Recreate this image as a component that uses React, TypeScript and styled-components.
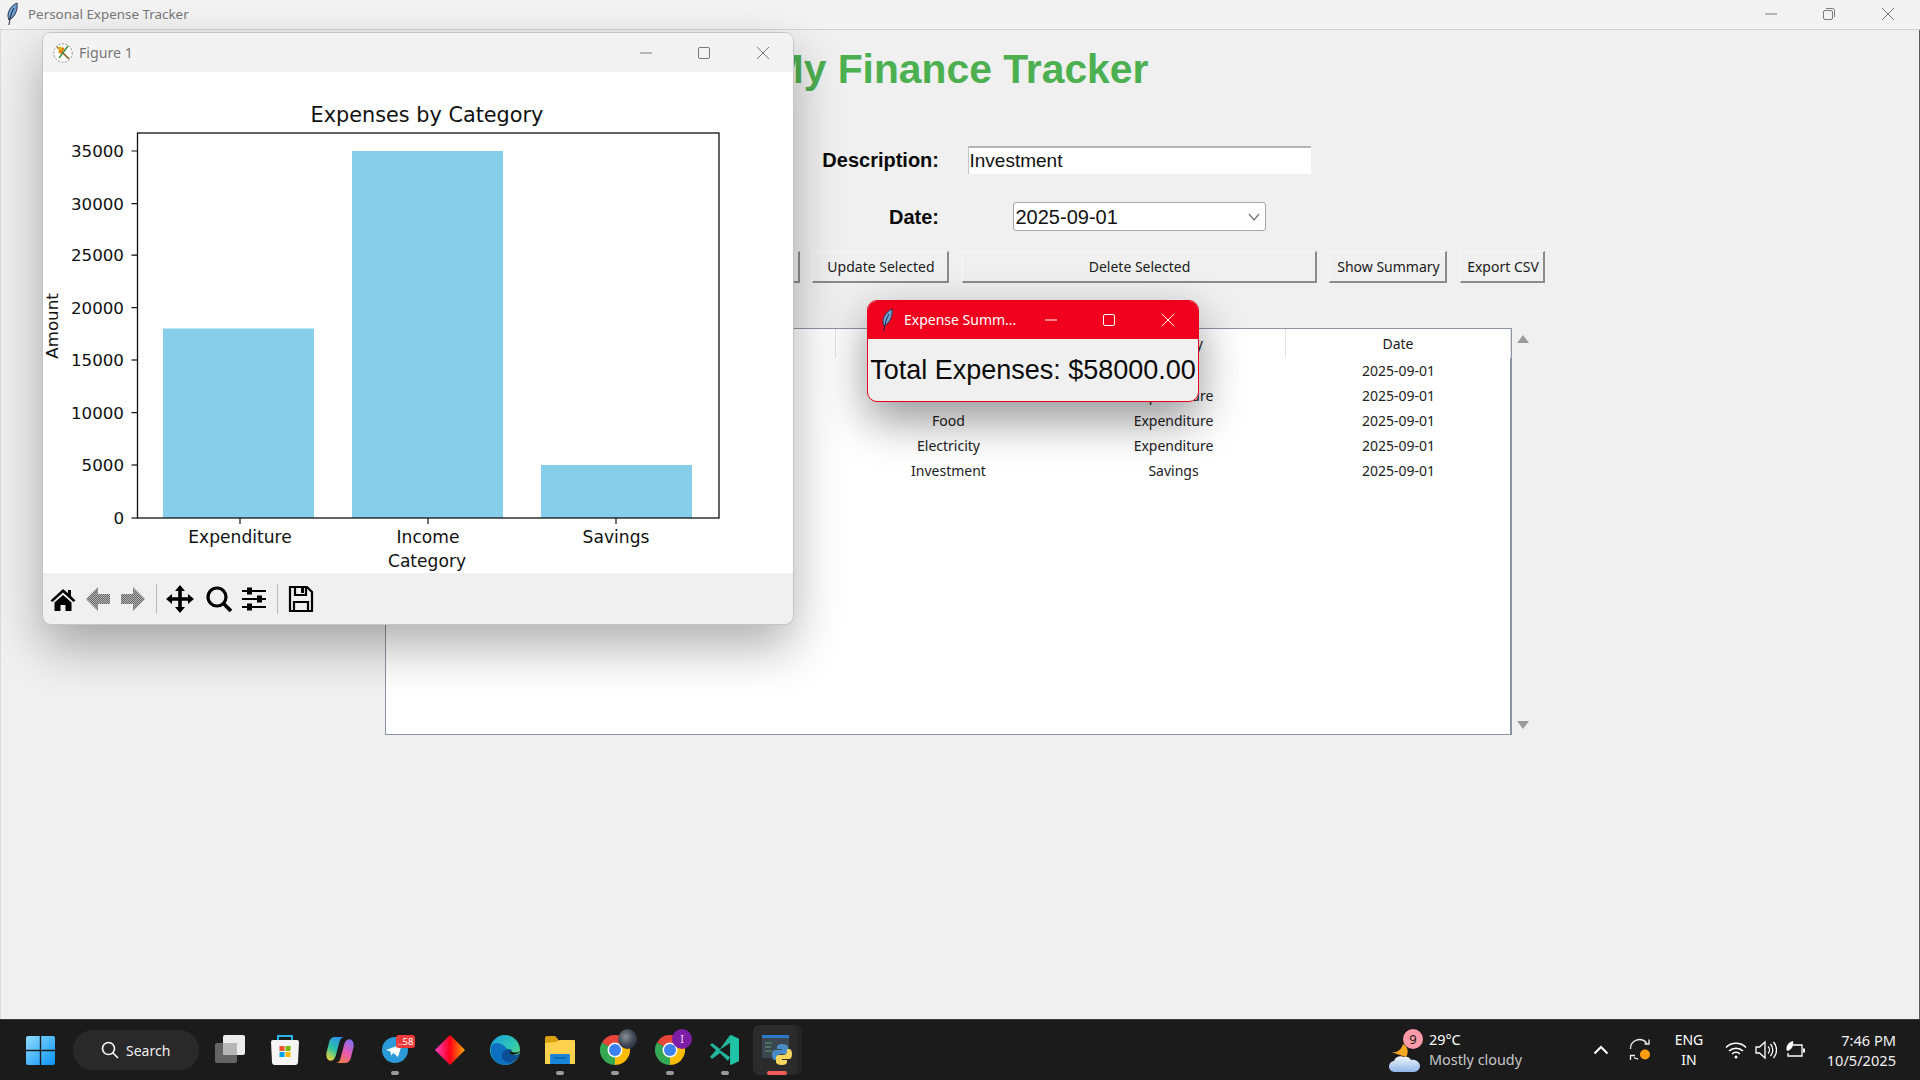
import React from 'react';
import styled, { createGlobalStyle } from 'styled-components';

const ui = '"Noto Sans", "Open Sans", sans-serif';
const arial = '"Liberation Sans", Arial, sans-serif';
const gridCols = '805px 149px 368px 130px 99px';

const Global = createGlobalStyle`
  html, body { margin: 0; padding: 0; width: 1920px; height: 1080px; overflow: hidden; }
  * { box-sizing: border-box; }
`;

const Screen = styled.div`
  position: relative;
  width: 1920px;
  height: 1080px;
  display: flex;
  flex-direction: column;
  background: #f0f0f0;
  overflow: hidden;
  font-family: ${ui};
`;

const TitleBar = styled.header`
  height: 30px;
  flex: none;
  display: flex;
  align-items: center;
  background: #f3f3f3;
  border-bottom: 1px solid #d2d2d2;
  padding: 0 3px 2px 5px;
`;
const AppTitle = styled.span`
  font-size: 13.4px;
  color: #777;
  margin-left: 9px;
  white-space: nowrap;
  flex: 1;
`;

const Controls = styled.div`
  display: flex;
  flex: none;
  color: ${(p: { $color: string }) => p.$color};
`;
const ControlSlot = styled.span`
  width: 58.6px;
  display: flex;
  justify-content: center;
  align-items: center;
`;

const Main = styled.main`
  flex: 1;
  display: flex;
  flex-direction: column;
  border-left: 1px solid #dcdcdc;
  border-right: 1px solid #5c5c5c;
`;
const Heading = styled.h1`
  margin: 15px 0 0;
  height: 48px;
  text-align: center;
  font: bold 40.8px/48px ${arial};
  color: #4caf50;
  padding-right: 2px;
`;
const FormGrid = styled.section`
  margin-top: 53px;
  display: grid;
  grid-template-columns: ${gridCols};
  grid-template-rows: 28px 29px;
  row-gap: 28px;
  align-items: center;
`;
const FieldLabel = styled.label`
  grid-column: 2;
  justify-self: end;
  padding: 1px 16px 0 0;
  font: bold 20px ${arial};
  color: #0a0a0a;
`;
const Entry = styled.input`
  grid-column: 3;
  justify-self: center;
  width: 343px;
  height: 28px;
  border: none;
  border-top: 2px solid #b4b4b4;
  border-left: 1px solid #c4c4c4;
  background: #fff;
  padding: 0 1px;
  font: 19px ${arial};
  color: #111;
  outline: none;
`;
const Combo = styled.div`
  grid-column: 3;
  justify-self: center;
  width: 253px;
  height: 29px;
  display: flex;
  align-items: center;
  justify-content: space-between;
  background: #fff;
  border: 1.5px solid #a6a6a6;
  border-radius: 3px;
  padding: 1px 5px 0 2px;
  font: 20px ${arial};
  color: #111;
`;
const ButtonRow = styled.div`
  margin-top: 20px;
  display: grid;
  grid-template-columns: ${gridCols};
  align-items: center;
`;
const TkButton = styled.button`
  justify-self: center;
  height: 32px;
  padding: 0 0 0 2px;
  width: ${(p: { $w: number }) => p.$w}px;
  background: #f0f0f0;
  border: 1px solid #d8d8d8;
  border-top-color: #f8f8f8;
  border-left-color: #f8f8f8;
  border-right: 2px solid #8c8c8c;
  border-bottom: 2px solid #8c8c8c;
  font: 14px ${ui};
  color: #1a1a1a;
  white-space: nowrap;
`;
const AddButton = styled(TkButton)`
  justify-self: end;
  margin-right: 6px;
`;

const TableArea = styled.section`
  margin: 45px 0 0 384px;
  display: flex;
  height: 407px;
`;
const TableBox = styled.div`
  width: 1127px;
  border: 1px solid #8a94a2;
  border-right-width: 2px;
  background: #fff;
`;
const RowGrid = styled.div`
  display: grid;
  grid-template-columns: repeat(5, 225px);
`;
const HeaderRow = styled(RowGrid)`
  height: 29px;
`;
const HeadCell = styled.div`
  display: flex;
  align-items: center;
  justify-content: center;
  font-size: 14px;
  color: #1a1a1a;
  border-right: 1px solid #e4e4e4;
`;
const BodyRow = styled(RowGrid)`
  height: 25px;
`;
const Cell = styled.div`
  display: flex;
  align-items: center;
  justify-content: center;
  font-size: 14px;
  color: #222;
`;
const ScrollColumn = styled.div`
  width: 22px;
  display: flex;
  flex-direction: column;
  justify-content: space-between;
  align-items: center;
  padding: 7px 0 6px;
  color: #9c9c9c;
`;

const FigureWindow = styled.section`
  position: absolute;
  left: 43px;
  top: 33px;
  width: 750px;
  height: 591px;
  display: flex;
  flex-direction: column;
  border-radius: 8px;
  overflow: hidden;
  background: #f0f0f0;
  box-shadow: 0 0 0 1px #c4c4c4, 0 22px 50px rgba(0, 0, 0, 0.32);
  z-index: 2;
`;
const FigureBar = styled.div`
  flex: none;
  height: 39px;
  display: flex;
  align-items: center;
  background: #f3f3f3;
  padding: 0 1px 0 10px;
`;
const FigureTitle = styled.span`
  flex: 1;
  margin-left: 6px;
  font-size: 14.2px;
  color: #777;
`;
const Canvas = styled.svg`
  display: block;
  flex: none;
  background: #fff;
`;
const ToolRow = styled.div`
  flex: 1;
  display: flex;
  align-items: center;
  gap: 7px;
  padding-left: 6px;
`;
const ToolDivider = styled.span`
  width: 1px;
  height: 30px;
  background: #b8b8b8;
  margin: 0 2px;
`;
const ToolGapAfter = styled.span`
  display: flex;
  margin-right: 4px;
`;

const SummaryWindow = styled.section`
  position: absolute;
  left: 867px;
  top: 300px;
  width: 332px;
  height: 102px;
  display: flex;
  flex-direction: column;
  border-radius: 10px;
  overflow: hidden;
  border: 1px solid #e8001c;
  background: #f0f0f0;
  box-shadow: 0 18px 46px rgba(0, 0, 0, 0.42);
  z-index: 3;
`;
const SummaryBar = styled.div`
  flex: none;
  height: 38px;
  display: flex;
  align-items: center;
  background: #f0001c;
  padding: 0 1px 1px 12px;
`;
const SummaryTitle = styled.span`
  flex: 1;
  margin-left: 10px;
  font-size: 14px;
  color: #fff;
  white-space: nowrap;
`;
const SummaryText = styled.p`
  flex: 1;
  margin: 0;
  display: flex;
  align-items: center;
  justify-content: center;
  font: 27px ${arial};
  color: #0a0a0a;
  white-space: nowrap;
`;

const Taskbar = styled.footer`
  height: 61px;
  flex: none;
  display: flex;
  align-items: center;
  background: #1b1b1b;
  border-top: 1px solid #3c3c3c;
  color: #fff;
  padding-left: 26px;
`;
const SearchPill = styled.div`
  margin-left: 18px;
  margin-right: 3px;
  width: 126px;
  height: 40px;
  border-radius: 20px;
  background: #292929;
  display: flex;
  align-items: center;
  padding-left: 28px;
  gap: 7px;
  font-size: 14px;
  color: #f0f0f0;
`;
const Slot = styled.div<{ $dot?: boolean; $active?: boolean }>`
  position: relative;
  width: 55px;
  height: 60px;
  display: flex;
  align-items: center;
  justify-content: center;
  padding: 0 ${(p) => (p.$active ? 5 : 0)}px 1px 0;
  &::before {
    content: ${(p) => (p.$active ? '""' : 'none')};
    position: absolute;
    left: 1px;
    right: 10px;
    top: 5px;
    bottom: 5px;
    border-radius: 6px;
    background: #2b2b2b;
    box-shadow: 5px 0 0 #242424;
  }
  &::after {
    content: ${(p) => (p.$dot || p.$active ? '""' : 'none')};
    position: absolute;
    left: ${(p) => (p.$active ? '46%' : '50%')};
    bottom: 5px;
    transform: translateX(-50%);
    width: ${(p) => (p.$active ? 20 : 8)}px;
    height: 4px;
    border-radius: 2px;
    background: ${(p) => (p.$active ? '#f25c5c' : '#9a9a9a')};
  }
  & > svg { position: relative; z-index: 1; }
`;
const CountBadge = styled.span`
  position: absolute;
  left: 29px;
  top: 15px;
  width: 19px;
  height: 13px;
  border-radius: 3px;
  background: #ee3a3a;
  color: #fff;
  font-size: 9.5px;
  line-height: 13px;
  text-align: center;
  z-index: 2;
`;
const LetterBadge = styled.span`
  position: absolute;
  left: 30px;
  top: 9px;
  width: 20px;
  height: 20px;
  border-radius: 50%;
  background: #7d1fa6;
  color: #e8d4f2;
  font-size: 11px;
  line-height: 20px;
  text-align: center;
  z-index: 2;
`;
const PhotoBadge = styled.span`
  position: absolute;
  left: 31px;
  top: 9px;
  width: 19px;
  height: 20px;
  border-radius: 50%;
  background: radial-gradient(circle at 40% 40%, #8a8f92, #3a4150 55%, #1d2438);
  z-index: 2;
`;
const Tray = styled.div`
  margin-left: auto;
  margin-right: 24px;
  display: flex;
  align-items: center;
  height: 60px;
`;
const WeatherIcon = styled.div`
  position: relative;
  width: 42px;
  height: 44px;
  display: flex;
  align-items: flex-end;
  padding-left: 2px;
`;
const WeatherBadge = styled.span`
  position: absolute;
  left: 16px;
  top: 1px;
  width: 20px;
  height: 20px;
  border-radius: 50%;
  background: #ff9aa8;
  color: #1b1b1b;
  font-size: 13px;
  line-height: 20px;
  text-align: center;
`;
const WeatherText = styled.div`
  width: 94px;
  display: flex;
  flex-direction: column;
  font-size: 14.4px;
  line-height: 20px;
  white-space: nowrap;
`;
const WeatherSub = styled.span`
  color: #c8c8c8;
`;
const TrayIcon = styled.span`
  display: flex;
  align-items: center;
  justify-content: center;
  width: ${(p: { $w: number; $ml: number }) => p.$w}px;
  margin-left: ${(p: { $w: number; $ml: number }) => p.$ml}px;
`;
const LangBlock = styled.div`
  width: 36px;
  margin-left: 18px;
  text-align: center;
  font-size: 14px;
  line-height: 20px;
`;
const Clock = styled.div`
  width: 89px;
  text-align: right;
  font-size: 14.6px;
  line-height: 20px;
  color: #f2f2f2;
`;

const Feather = () => (
  <svg width="14" height="24" viewBox="0 0 14 24">
    <path d="M4 18C1 12 5 4 12 1c1 7-2 14-8 17z" fill="#6f9fd0" stroke="#2a3450" strokeWidth="1" />
    <path d="M9 6C7 10 5 14 4 23" fill="none" stroke="#1c2440" strokeWidth="1" />
  </svg>
);

const MplIcon = () => (
  <svg width="20" height="20" viewBox="0 0 20 20">
    <circle cx="10" cy="10" r="9.2" fill="#fff" stroke="#777" strokeWidth="0.8" strokeDasharray="2 1.5" />
    <path d="M4 4l12 12" stroke="#8a5a1c" strokeWidth="1.6" />
    <path d="M15 3L6 15" stroke="#2f8f3a" strokeWidth="1.4" />
    <path d="M5 9l5-5 1.5 2-4 5z" fill="#f07a12" />
    <circle cx="7" cy="5.5" r="2" fill="#e2b11f" />
  </svg>
);

const WinControls = ({ color, restore }: { color: string; restore?: boolean }) => (
  <Controls $color={color}>
    <ControlSlot>
      <svg width="14" height="14" viewBox="0 0 14 14"><path d="M1 7h12" stroke="currentColor" strokeWidth="1" /></svg>
    </ControlSlot>
    <ControlSlot>
      {restore ? (
        <svg width="14" height="14" viewBox="0 0 14 14" fill="none" stroke="currentColor" strokeWidth="1">
          <rect x="1.5" y="3.5" width="9" height="9" rx="1.5" />
          <path d="M4 1.5h6.5a2 2 0 0 1 2 2V10" />
        </svg>
      ) : (
        <svg width="14" height="14" viewBox="0 0 14 14" fill="none" stroke="currentColor" strokeWidth="1">
          <rect x="1.5" y="1.5" width="11" height="11" rx="1.5" />
        </svg>
      )}
    </ControlSlot>
    <ControlSlot>
      <svg width="14" height="14" viewBox="0 0 14 14"><path d="M1 1l12 12M13 1L1 13" stroke="currentColor" strokeWidth="1" /></svg>
    </ControlSlot>
  </Controls>
);

const AX = { l: 94.5, r: 676, t: 61, b: 446 };
const yTicks = [
  { v: '35000', y: 79 }, { v: '30000', y: 131.6 }, { v: '25000', y: 183.2 }, { v: '20000', y: 235.6 },
  { v: '15000', y: 288 }, { v: '10000', y: 340.6 }, { v: '5000', y: 393 }, { v: '0', y: 446 },
];
const bars = [
  { label: 'Expenditure', x: 120, w: 151, y: 256.5, tick: 197 },
  { label: 'Income', x: 309, w: 151, y: 79, tick: 385 },
  { label: 'Savings', x: 498, w: 151, y: 393, tick: 573 },
];

const Chart = () => (
  <Canvas width="750" height="501" viewBox="0 0 750 501" fontFamily='"DejaVu Sans", sans-serif'>
    <text x="384" y="49.5" fontSize="20.8" textAnchor="middle" fill="#111">Expenses by Category</text>
    {bars.map((b) => (
      <g key={b.label}>
        <rect x={b.x} y={b.y} width={b.w} height={AX.b - b.y} fill="#87ceeb" />
        <path d={`M${b.tick} ${AX.b}v6`} stroke="#111" strokeWidth="1.2" />
        <text x={b.tick} y="471" fontSize="17.1" textAnchor="middle" fill="#111">{b.label}</text>
      </g>
    ))}
    <rect x={AX.l} y={AX.t} width={AX.r - AX.l} height={AX.b - AX.t} fill="none" stroke="#111" strokeWidth="1.3" />
    {yTicks.map((t) => (
      <g key={t.v}>
        <path d={`M${AX.l - 6} ${t.y}h6`} stroke="#111" strokeWidth="1.2" />
        <text x="81" y={t.y + 6} fontSize="16.7" textAnchor="end" fill="#111">{t.v}</text>
      </g>
    ))}
    <text x="384" y="495" fontSize="17.1" textAnchor="middle" fill="#111">Category</text>
    <text transform="translate(15 254) rotate(-90)" fontSize="16.7" textAnchor="middle" fill="#111">Amount</text>
  </Canvas>
);

const Dither = ({ id }: { id: string }) => (
  <defs>
    <pattern id={id} width="2" height="2" patternUnits="userSpaceOnUse">
      <rect width="2" height="2" fill="#b4b4b4" />
      <rect width="1" height="1" fill="#666" />
      <rect x="1" y="1" width="1" height="1" fill="#666" />
    </pattern>
  </defs>
);

const HomeIcon = () => (
  <svg width="28" height="28" viewBox="0 0 28 28">
    <path d="M14 4L1.5 15.5 3.5 17 14 7.5 24.5 17l2-1.5L22 11V5h-3v3.2z" fill="#000" />
    <path d="M5.5 17.5L14 10l8.5 7.5V26h-6v-6h-5v6h-6z" fill="#000" />
  </svg>
);
const BackIcon = () => (
  <svg width="28" height="28" viewBox="0 0 28 28">
    <Dither id="dl" />
    <path d="M14 2L2 14l12 12v-7h12v-10H14z" fill="url(#dl)" />
  </svg>
);
const ForwardIcon = () => (
  <svg width="28" height="28" viewBox="0 0 28 28">
    <Dither id="dr" />
    <path d="M14 2l12 12-12 12v-7H2v-10h12z" fill="url(#dr)" />
  </svg>
);
const MoveIcon = () => (
  <svg width="28" height="28" viewBox="0 0 28 28">
    <path d="M14 0l5 6h-3.2v6.2H22V9l6 5-6 5v-3.2h-6.2V22H19l-5 6-5-6h3.2v-6.2H6V19l-6-5 6-5v3.2h6.2V6H9z" fill="#000" />
  </svg>
);
const ZoomIcon = () => (
  <svg width="28" height="28" viewBox="0 0 28 28" fill="none" stroke="#000">
    <circle cx="12" cy="12" r="9" strokeWidth="3.2" />
    <path d="M18.5 18.5L26 26" strokeWidth="3.8" />
  </svg>
);
const SlidersIcon = () => (
  <svg width="28" height="28" viewBox="0 0 28 28">
    <path d="M2 6h24M2 14h24M2 22h24" stroke="#000" strokeWidth="2" />
    <rect x="7" y="2.5" width="5" height="7" fill="#000" />
    <rect x="17" y="10.5" width="5" height="7" fill="#000" />
    <rect x="7" y="18.5" width="5" height="7" fill="#000" />
  </svg>
);
const SaveIcon = () => (
  <svg width="28" height="28" viewBox="0 0 28 28" fill="none" stroke="#000" strokeWidth="2.2">
    <path d="M3 2h17l5 5v19H3z" />
    <path d="M8 2v8h11V2" />
    <path d="M7 26v-9h14v9" />
    <rect x="14" y="3" width="3" height="5" fill="#000" stroke="none" />
  </svg>
);

const WindowsLogo = () => (
  <svg width="29" height="29" viewBox="0 0 29 29">
    <defs>
      <linearGradient id="win" x1="0" y1="0" x2="1" y2="1">
        <stop offset="0" stopColor="#8fdcff" />
        <stop offset="1" stopColor="#0a93f5" />
      </linearGradient>
    </defs>
    <path d="M2 0h11.8v13.8H0V2a2 2 0 0 1 2-2zM15.2 0H27a2 2 0 0 1 2 2v11.8H15.2zM0 15.2h13.8V29H2a2 2 0 0 1-2-2zM15.2 15.2H29V27a2 2 0 0 1-2 2H15.2z" fill="url(#win)" />
  </svg>
);
const SearchGlass = () => (
  <svg width="18" height="18" viewBox="0 0 18 18" fill="none" stroke="#f4f4f4" strokeWidth="1.7">
    <circle cx="7.5" cy="7.5" r="6" />
    <path d="M12 12l5 5" />
  </svg>
);
const TaskView = () => (
  <svg width="32" height="30" viewBox="0 0 32 30">
    <rect x="9" y="0" width="22" height="20" rx="2" fill="#ececec" />
    <rect x="1" y="8" width="22" height="20" rx="2" fill="#6a6a6a" fillOpacity="0.92" />
    <rect x="9" y="8" width="14" height="12" fill="#b6b6b6" />
  </svg>
);
const StoreIcon = () => (
  <svg width="30" height="32" viewBox="0 0 30 32">
    <path d="M8 7V2h14v5" fill="none" stroke="#28b4e8" strokeWidth="2" />
    <path d="M3 6h24a2 2 0 0 1 2 2l-1 20a3 3 0 0 1-3 3H5a3 3 0 0 1-3-3L1 8a2 2 0 0 1 2-2z" fill="#f5f5f5" />
    <rect x="9.5" y="12" width="5" height="5" fill="#f0522a" />
    <rect x="15.5" y="12" width="5" height="5" fill="#7ab800" />
    <rect x="9.5" y="18" width="5" height="5" fill="#00a4ef" />
    <rect x="15.5" y="18" width="5" height="5" fill="#ffb900" />
  </svg>
);
const CopilotIcon = () => (
  <svg width="28" height="28" viewBox="0 0 30 30">
    <defs>
      <linearGradient id="copA" x1="0.7" y1="0" x2="0.2" y2="1">
        <stop offset="0" stopColor="#2d8ff0" />
        <stop offset="0.55" stopColor="#2ec4a0" />
        <stop offset="1" stopColor="#f2d43a" />
      </linearGradient>
      <linearGradient id="copB" x1="0.7" y1="0" x2="0.2" y2="1">
        <stop offset="0" stopColor="#8a6cf0" />
        <stop offset="0.5" stopColor="#e85ab0" />
        <stop offset="1" stopColor="#f2803a" />
      </linearGradient>
    </defs>
    <path d="M10 1h10c-3 0-4.500 2-5.500 5L10.500 21c-1 3.500-3 6-6 5.500C1 26 0 22 .5 18L3 8C4 3 6 1 10 1z" fill="url(#copA)" />
    <path d="M20 29H10c3 0 4.500-2 5.500-5l4-15c1-3.500 3-6 6-5.500 3.500.5 4.500 4.500 4 8.500L27 22c-1 5-3 7-7 7z" fill="url(#copB)" />
  </svg>
);
const TelegramIcon = () => (
  <svg width="28" height="28" viewBox="0 0 28 28">
    <circle cx="14" cy="14" r="13" fill="#2a9ad8" />
    <path d="M5 14l16-6-4 13-4.500-4-2.500 2.500-.5-4z" fill="#fff" />
  </svg>
);
const DiamondIcon = () => (
  <svg width="30" height="30" viewBox="0 0 30 30">
    <defs>
      <linearGradient id="dia" x1="0" y1="0" x2="1" y2="0">
        <stop offset="0" stopColor="#ff40c8" />
        <stop offset="0.5" stopColor="#ff0018" />
        <stop offset="1" stopColor="#ffa800" />
      </linearGradient>
    </defs>
    <path d="M15 0l15 15-15 15L0 15z" fill="url(#dia)" />
  </svg>
);
const EdgeIcon = () => (
  <svg width="30" height="30" viewBox="0 0 30 30">
    <defs>
      <linearGradient id="edgeA" x1="0" y1="0" x2="1" y2="1">
        <stop offset="0" stopColor="#1a9ee0" />
        <stop offset="0.55" stopColor="#2cc8b0" />
        <stop offset="1" stopColor="#7adf5c" />
      </linearGradient>
    </defs>
    <circle cx="15" cy="15" r="15" fill="url(#edgeA)" />
    <path d="M2 10c-4 10 3 20 13 20 4 0 8-1.5 10.500-4-6 2-11 0-12.500-4-1.500-4 1-7 4-8C13 8 6 6 2 10z" fill="#0d6fc0" />
    <path d="M30 17c-1 3-5 4-8 2.500-2-1-2-3 0-4.500-3-2-9-1-10 4-.8 4 2 8 7 8.500 5 0 10-4 11-10.500z" fill="#0b4f96" />
    <path d="M21 16c2.500 2 6 2 9 0-.5 1.500-4 4.500-8 3.500-2.500-.5-3-2-1-3.500z" fill="#1b1b1b" />
  </svg>
);
const FolderIcon = () => (
  <svg width="30" height="28" viewBox="0 0 30 28">
    <path d="M0 2a2 2 0 0 1 2-2h8l3 3v5H0z" fill="#d9a010" />
    <path d="M0 7l11-1 3-2h15a1 1 0 0 1 1 1v23H0z" fill="#ffd24d" />
    <rect x="5" y="18" width="20" height="10" rx="1" fill="#1a86d8" />
    <rect x="9" y="21" width="12" height="1.5" fill="#0b5ea8" />
  </svg>
);
const ChromeIcon = () => (
  <svg width="30" height="30" viewBox="0 0 30 30">
    <path d="M15 15L2 7.5A15 15 0 0 1 28 7.5z" fill="#e8453a" />
    <path d="M15 15L2 7.5A15 15 0 0 0 15 30z" fill="#34a853" />
    <path d="M15 15L28 7.5A15 15 0 0 1 15 30z" fill="#fbbc05" />
    <circle cx="15" cy="15" r="7.5" fill="#fff" />
    <circle cx="15" cy="15" r="6" fill="#3b82f0" />
  </svg>
);
const VsCodeIcon = () => (
  <svg width="30" height="30" viewBox="0 0 30 30">
    <path d="M0 10l2-2 8 6 10-14 9 4v22l-9 4V8L9.5 15 20 22l-2 4-8-8-8 6-2-2 6-7z" fill="#22b79c" />
    <path d="M21 0l8 4v22l-8 4z" fill="#1fc4a4" />
  </svg>
);
const PythonAppIcon = () => (
  <svg width="30" height="30" viewBox="0 0 30 30">
    <rect x="0" y="0" width="27" height="23" fill="#3c4650" />
    <rect x="0" y="0" width="27" height="3" fill="#2a7ac8" />
    <path d="M3 8h7M3 12h6M3 16h7" stroke="#5aa060" strokeWidth="1.2" />
    <path d="M20 9c-3 0-5 1-5 3v2h5v1h-7c-2 0-3 2-3 5s1 5 3 5h2v-3c0-2 2-3 4-3h4c2 0 3-1 3-3v-4c0-2-3-3-6-3z" fill="#4a8cc8" />
    <path d="M20 30c3 0 5-1 5-3v-2h-5v-1h7c2 0 3-2 3-5s-1-5-3-5h-2v3c0 2-2 3-4 3h-4c-2 0-3 1-3 3v4c0 2 3 3 6 3z" fill="#f6d55c" />
  </svg>
);
const CloudMoon = () => (
  <svg width="32" height="32" viewBox="0 0 32 32">
    <defs>
      <linearGradient id="cloud" x1="0" y1="0" x2="0" y2="1">
        <stop offset="0" stopColor="#f2f6ff" />
        <stop offset="1" stopColor="#8fb6e8" />
      </linearGradient>
    </defs>
    <path d="M2 12c5 1 10-1 12-8 5 2 6 9 3 13z" fill="#f5a623" />
    <path d="M6 32a5.500 5.500 0 0 1-1-11C6 17 11 15 15 17c2-1 6 0 7 3 4-1 9 2 9 6 0 3-3 6-6 6z" fill="url(#cloud)" />
  </svg>
);
const Chevron = () => (
  <svg width="16" height="10" viewBox="0 0 16 10" fill="none" stroke="#fff" strokeWidth="2"><path d="M1.5 8.500L8 2l6.500 6.500" /></svg>
);
const SyncIcon = () => (
  <svg width="24" height="24" viewBox="0 0 24 24" fill="none" stroke="#f0f0f0" strokeWidth="1.3">
    <path d="M1.5 11a9 9 0 0 1 16-6M20 1.500V6h-4.500" />
    <path d="M5 19.500A9 9 0 0 0 9 21M1.500 22v-4.500H6" />
    <circle cx="16" cy="16.500" r="5" fill="#ff9d0a" stroke="none" />
  </svg>
);
const WifiIcon = () => (
  <svg width="22" height="18" viewBox="0 0 22 18" fill="none" stroke="#fff" strokeWidth="1.5">
    <path d="M1 6.500a14 14 0 0 1 20 0M4 10a10 10 0 0 1 14 0M7 13a5.500 5.500 0 0 1 8 0" />
    <circle cx="11" cy="16" r="1.5" fill="#fff" stroke="none" />
  </svg>
);
const VolumeIcon = () => (
  <svg width="22" height="20" viewBox="0 0 22 20" fill="none" stroke="#fff" strokeWidth="1.3">
    <path d="M1 7v6h3.500L10 18V2L4.500 7z" />
    <path d="M13 6.500a5 5 0 0 1 0 7M15.500 4a9 9 0 0 1 0 12M18.500 2a12 12 0 0 1 0 16" />
  </svg>
);
const BatteryLeaf = () => (
  <svg width="22" height="20" viewBox="0 0 22 20" fill="none" stroke="#fff" strokeWidth="1.3">
    <path d="M8 5h9v11H3v-3" />
    <path d="M19 8.500v4" strokeWidth="2" />
    <path d="M2 11C0 6 4 2 8 1c1 4-1 9-6 10z" fill="#fff" stroke="none" />
  </svg>
);
const ComboArrow = () => (
  <svg width="12" height="8" viewBox="0 0 12 8" fill="none" stroke="#777" strokeWidth="1.2"><path d="M1 1l5 6 5-6" /></svg>
);
const ScrollArrow = ({ down }: { down?: boolean }) => (
  <svg width="12" height="8" viewBox="0 0 12 8"><path d={down ? 'M0 0h12L6 8z' : 'M0 8h12L6 0z'} fill="currentColor" /></svg>
);

const columns = ['ID', 'Amount', 'Description', 'Category', 'Date'];
const rows = [
  { description: '', category: 'Income' },
  { description: '', category: 'Expenditure' },
  { description: 'Food', category: 'Expenditure' },
  { description: 'Electricity', category: 'Expenditure' },
  { description: 'Investment', category: 'Savings' },
];

export default function App() {
  return (
    <Screen>
      <Global />
      <TitleBar>
        <Feather />
        <AppTitle>Personal Expense Tracker</AppTitle>
        <WinControls color="#7c7c7c" restore />
      </TitleBar>

      <Main>
        <Heading>My Finance Tracker</Heading>
        <FormGrid>
          <FieldLabel>Description:</FieldLabel>
          <Entry readOnly value="Investment" />
          <FieldLabel>Date:</FieldLabel>
          <Combo>
            2025-09-01
            <ComboArrow />
          </Combo>
        </FormGrid>
        <ButtonRow>
          <AddButton $w={100}>Add Expense</AddButton>
          <TkButton $w={137}>Update Selected</TkButton>
          <TkButton $w={355}>Delete Selected</TkButton>
          <TkButton $w={118}>Show Summary</TkButton>
          <TkButton $w={85}>Export CSV</TkButton>
        </ButtonRow>
        <TableArea>
          <TableBox>
            <HeaderRow>
              {columns.map((c) => (
                <HeadCell key={c}>{c}</HeadCell>
              ))}
            </HeaderRow>
            {rows.map((r, i) => (
              <BodyRow key={i}>
                <Cell />
                <Cell />
                <Cell>{r.description}</Cell>
                <Cell>{r.category}</Cell>
                <Cell>2025-09-01</Cell>
              </BodyRow>
            ))}
          </TableBox>
          <ScrollColumn>
            <ScrollArrow />
            <ScrollArrow down />
          </ScrollColumn>
        </TableArea>
      </Main>

      <Taskbar>
        <WindowsLogo />
        <SearchPill>
          <SearchGlass />
          Search
        </SearchPill>
        <Slot><TaskView /></Slot>
        <Slot><StoreIcon /></Slot>
        <Slot><CopilotIcon /></Slot>
        <Slot $dot><TelegramIcon /><CountBadge>..58</CountBadge></Slot>
        <Slot><DiamondIcon /></Slot>
        <Slot><EdgeIcon /></Slot>
        <Slot $dot><FolderIcon /></Slot>
        <Slot $dot><ChromeIcon /><PhotoBadge /></Slot>
        <Slot $dot><ChromeIcon /><LetterBadge>I</LetterBadge></Slot>
        <Slot $dot><VsCodeIcon /></Slot>
        <Slot $active><PythonAppIcon /></Slot>
        <Tray>
          <WeatherIcon>
            <CloudMoon />
            <WeatherBadge>9</WeatherBadge>
          </WeatherIcon>
          <WeatherText>
            <span>29°C</span>
            <WeatherSub>Mostly cloudy</WeatherSub>
          </WeatherText>
          <TrayIcon $w={16} $ml={70}><Chevron /></TrayIcon>
          <TrayIcon $w={24} $ml={20}><SyncIcon /></TrayIcon>
          <LangBlock>ENG<br />IN</LangBlock>
          <TrayIcon $w={22} $ml={18}><WifiIcon /></TrayIcon>
          <TrayIcon $w={22} $ml={8}><VolumeIcon /></TrayIcon>
          <TrayIcon $w={22} $ml={8}><BatteryLeaf /></TrayIcon>
          <Clock>7:46 PM<br />10/5/2025</Clock>
        </Tray>
      </Taskbar>

      <FigureWindow>
        <FigureBar>
          <MplIcon />
          <FigureTitle>Figure 1</FigureTitle>
          <WinControls color="#7a7a7a" />
        </FigureBar>
        <Chart />
        <ToolRow>
          <HomeIcon />
          <BackIcon />
          <ForwardIcon />
          <ToolDivider />
          <ToolGapAfter><MoveIcon /></ToolGapAfter>
          <ZoomIcon />
          <SlidersIcon />
          <ToolDivider />
          <SaveIcon />
        </ToolRow>
      </FigureWindow>

      <SummaryWindow>
        <SummaryBar>
          <Feather />
          <SummaryTitle>Expense Summ...</SummaryTitle>
          <WinControls color="#ffffff" />
        </SummaryBar>
        <SummaryText>Total Expenses: $58000.00</SummaryText>
      </SummaryWindow>
    </Screen>
  );
}
